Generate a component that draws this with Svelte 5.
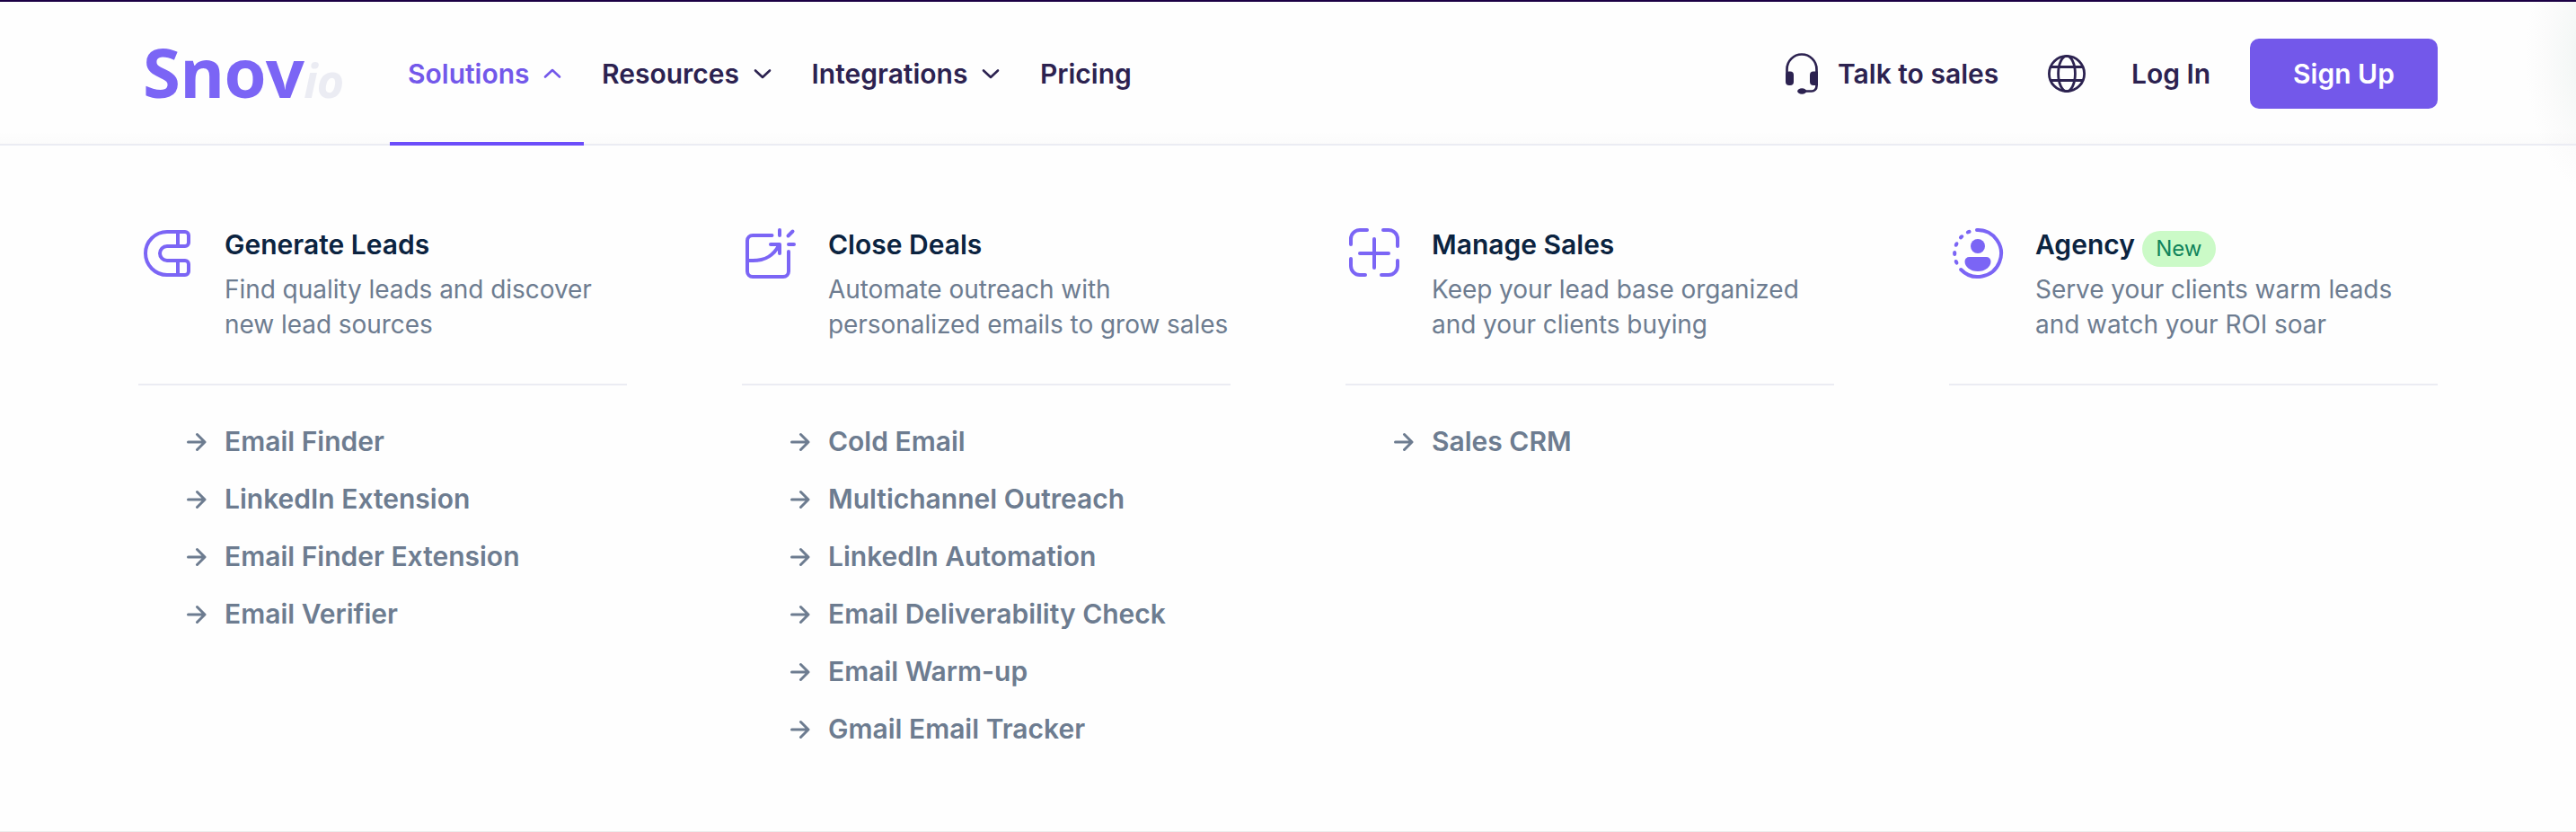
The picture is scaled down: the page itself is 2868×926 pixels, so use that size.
<script>
  const nav = [
    { label: 'Solutions', arrow: true, active: true },
    { label: 'Resources', arrow: true },
    { label: 'Integrations', arrow: true },
    { label: 'Pricing' }
  ];
  const columns = [
    { icon: 'magnet', title: 'Generate Leads', lines: ['Find quality leads and discover', 'new lead sources'],
      links: ['Email Finder', 'LinkedIn Extension', 'Email Finder Extension', 'Email Verifier'] },
    { icon: 'deal', title: 'Close Deals', lines: ['Automate outreach with', 'personalized emails to grow sales'],
      links: ['Cold Email', 'Multichannel Outreach', 'LinkedIn Automation', 'Email Deliverability Check', 'Email Warm-up', 'Gmail Email Tracker'] },
    { icon: 'manage', title: 'Manage Sales', lines: ['Keep your lead base organized', 'and your clients buying'], links: ['Sales CRM'] },
    { icon: 'agency', title: 'Agency', badge: 'New', lines: ['Serve your clients warm leads', 'and watch your ROI soar'], links: [] }
  ];
  const dots = [[21.7, 8.2, -25], [13.6, 13.8, -45], [8.1, 22, -68], [6.2, 32, 90], [8.1, 41.8, 68]];
</script>

<div class="page">
  <header>
    <div class="logo"><span class="snov">Snov</span><span class="io">io</span></div>
    <nav>
      {#each nav as item}
        <a class="item" class:active={item.active} href="#top">
          <span>{item.label}</span>
          {#if item.arrow}
            <svg class="chev" viewBox="0 0 22 14" width="22" height="14"><path d={item.active ? 'M3 10.500l8-7.500 8 7.500' : 'M3 3.500l8 7.500 8-7.500'} /></svg>
          {/if}
        </a>
      {/each}
    </nav>
    <div class="right">
      <svg class="headset" viewBox="0 0 36 46" width="36" height="46">
        <path d="M1.500 26V18a16.500 16.500 0 0 1 33 0V37a5.500 5.500 0 0 1-5.500 5.500H18" fill="none" stroke="currentColor" stroke-width="2.700" />
        <rect x="0" y="20.500" width="9" height="15.500" rx="4" fill="currentColor" />
        <path d="M31 20.500a4 4 0 0 0-4 4V32a4 4 0 0 0 4 4h5V20.500z" fill="currentColor" />
        <ellipse cx="18.200" cy="42.500" rx="5" ry="3.200" fill="currentColor" />
      </svg>
      <span class="talk">Talk to sales</span>
      <svg class="globe" viewBox="0 0 42 42" width="42" height="42" fill="none" stroke="currentColor" stroke-width="2.800">
        <circle cx="21" cy="21" r="19.600" /><ellipse cx="21" cy="21" rx="9.400" ry="19.600" />
        <path d="M3 13.500h36M3 28.500h36" />
      </svg>
      <span class="login">Log In</span>
      <button>Sign Up</button>
    </div>
  </header>

  <main>
    {#each columns as col}
      <section>
        <div class="head">
          <svg class="icon" viewBox="0 0 64 64" width="64" height="64">
            {#if col.icon === 'magnet'}
              <path d="M32 8h20a4 4 0 0 1 4 4v8a4 4 0 0 1-4 4H32a8 8 0 0 0 0 16h20a4 4 0 0 1 4 4v8a4 4 0 0 1-4 4H32a24 24 0 0 1 0-48zM44 8v16M44 40v16" />
            {:else if col.icon === 'deal'}
              <path d="M33.500 12H12a6 6 0 0 0-6 6v34a6 6 0 0 0 6 6h34a6 6 0 0 0 6-6V30M7 40h5c14 0 23-5 29.500-17.500M32 22h10v10M42 6v6M51.500 12.500l5-5M52 22h6" />
            {:else if col.icon === 'manage'}
              <path d="M24 6h-8a10 10 0 0 0-10 10v6M42 6h6a10 10 0 0 1 10 10v8M6 38v8a10 10 0 0 0 10 10h6M58 40v6a10 10 0 0 1-10 10h-8M32 16v32M16 32h32" />
            {:else}
              <path d="M31 6a26 26 0 1 1-17.800 44" />
              {#each dots as [x, y, angle]}
                <ellipse class="solid" cx={x} cy={y} rx="2.900" ry="2.100" transform={`rotate(${angle} ${x} ${y})`} />
              {/each}
              <circle class="solid" cx="32" cy="24" r="8" />
              <path class="solid" d="M22.500 36h19a5 5 0 0 1 5 5c0 6-6 11-14.500 11s-14.500-5-14.500-11a5 5 0 0 1 5-5z" />
            {/if}
          </svg>
          <div>
            <h2>{col.title}{#if col.badge}<span class="badge">{col.badge}</span>{/if}</h2>
            <p>{#each col.lines as line}<span>{line}</span>{/each}</p>
          </div>
        </div>
        <ul>
          {#each col.links as link}
            <li>
              <svg viewBox="0 0 24 24" width="24" height="24"><path d="M3.500 13h18M13.500 4.500l8.500 8.500-8.500 8.500" /></svg>
              <span>{link}</span>
            </li>
          {/each}
        </ul>
      </section>
    {/each}
  </main>
</div>

<style>
  :global(body) { background: #fefefe; }
  .page {
    box-sizing: border-box; height: 926px; border-top: 2px solid #1b0044; border-bottom: 1px solid #ededed;
    font-family: Inter, sans-serif; overflow: hidden;
    background: radial-gradient(ellipse 74px 150px at 2886px 62px, #edf2f1 0, #f5f8f7 35%, #fbfbfb 70%, #fefefe 100%) no-repeat, #fefefe;
  }
  header {
    box-sizing: border-box; height: 160px; border-bottom: 2px solid #ebecf3; display: flex; align-items: center; padding: 2px 154px 0;
    color: #2c2250; font-size: 30px; font-weight: 600;
    background: linear-gradient(to top, rgba(0, 0, 0, 0.012), rgba(0, 0, 0, 0) 14px);
  }
  .logo { box-sizing: border-box; width: 280px; padding: 0 0 6px 5px; flex: none; font-family: "Open Sans", sans-serif; white-space: nowrap; }
  .snov { font-size: 76px; font-weight: 700; color: #7b65f5; letter-spacing: -0.700px; }
  .io { font-size: 52px; font-weight: 700; font-style: italic; color: #ebecf3; letter-spacing: -1px; }
  nav { display: flex; align-self: stretch; margin: -2px 0 -2px; }
  .item { box-sizing: border-box; display: flex; align-items: center; gap: 14.500px; padding: 4px 24px 0 20px; border-bottom: 4px solid transparent; color: inherit; text-decoration: none; }
  .active { color: #7358ea; border-bottom-color: #6c4dfa; }
  .chev path { fill: none; stroke: currentColor; stroke-width: 2.600; stroke-linecap: round; stroke-linejoin: round; }
  .right { margin-left: auto; display: flex; align-items: center; white-space: nowrap; }
  .talk { width: 234px; margin-left: 22px; }
  .globe { margin-right: 51px; }
  .login { width: 132px; }
  button { width: 209px; height: 78px; padding: 0; border: 0; border-radius: 10px; background: #7358ea; color: #fff; font: 600 30px Inter, sans-serif; }
  main { display: grid; grid-template-columns: repeat(4, 544px); gap: 128px; padding: 88px 154px 0; }
  .head { display: flex; height: 177px; border-bottom: 2px solid #ebecf3; }
  .icon { flex: none; margin-right: 32px; fill: none; stroke: #7b65f5; stroke-width: 4; stroke-linecap: round; stroke-linejoin: round; }
  .icon .solid { fill: #7b65f5; stroke: none; }
  h2 { display: flex; margin: 0; height: 44px; font-size: 30px; line-height: 44px; font-weight: 600; color: #0b2340; }
  .badge { box-sizing: border-box; width: 82px; height: 40px; margin: 7px 0 0 8px; border-radius: 20px; background: #cbfac7; color: #11845b; font-size: 24px; font-weight: 400; line-height: 40px; text-align: center; }
  p { margin: 9px 0 0; font-size: 28px; line-height: 39px; letter-spacing: -0.050px; color: #6d7c90; }
  p span { display: block; white-space: nowrap; }
  ul { list-style: none; margin: 30px 0 0; padding: 0 0 0 52px; }
  li { display: flex; align-items: center; gap: 20px; height: 64px; font-size: 30px; font-weight: 600; color: #6d7c90; }
  li path { fill: none; stroke: currentColor; stroke-width: 3; stroke-linecap: round; stroke-linejoin: round; }
</style>
